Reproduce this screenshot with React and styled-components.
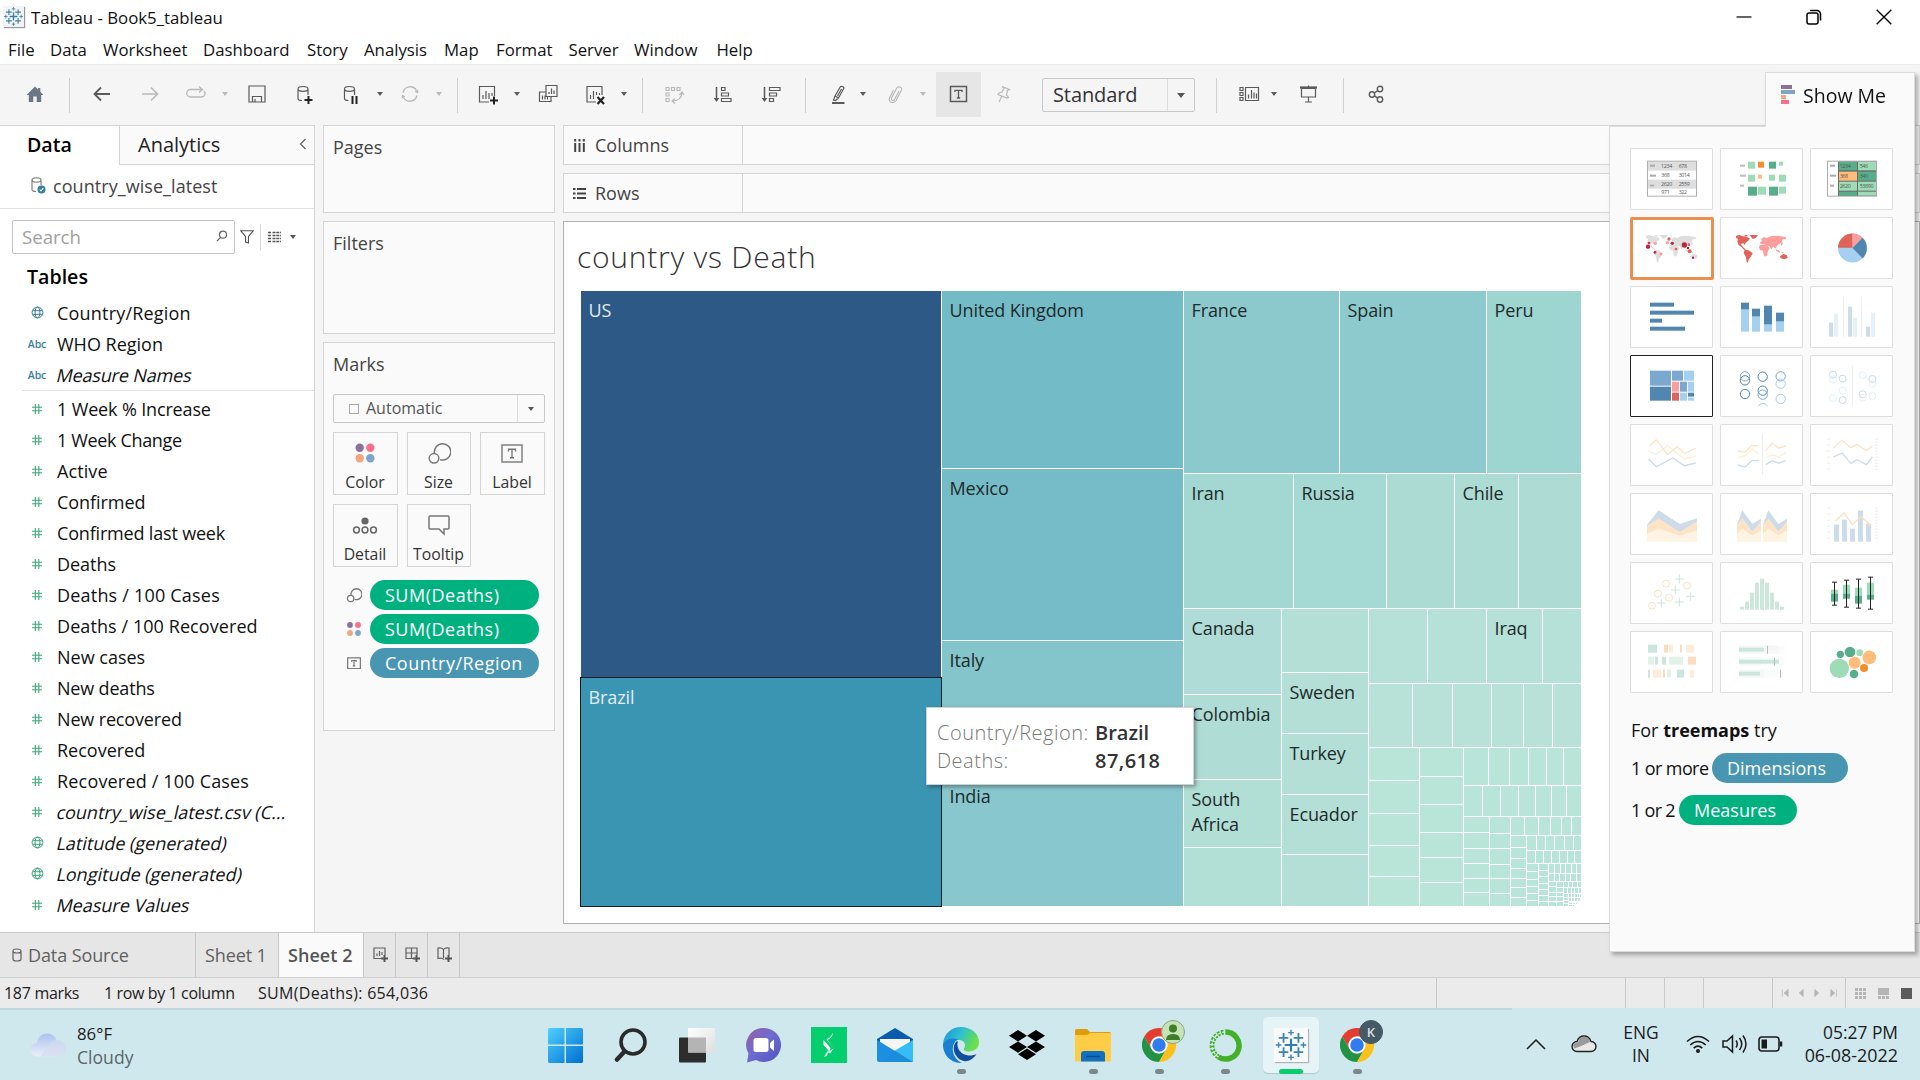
import React from 'react';
import styled, { createGlobalStyle, css } from 'styled-components';

const Global = createGlobalStyle`
  *, *::before, *::after { box-sizing: border-box; }
  html, body { margin: 0; padding: 0; overflow: hidden; }
  body { font-family: 'Open Sans', 'Noto Sans', sans-serif; font-size: 18px; color: #111; background: #fff; }
  svg { display: block; flex: none; }
`;

const line = '#d4d4d4';
const green = '#00b180';
const blue = '#4996b2';

/* ---------- shell ---------- */
const Desktop = styled.div`
  position: relative;
  width: 1920px;
  height: 1080px;
  display: flex;
  flex-direction: column;
  overflow: hidden;
`;
const TitleBar = styled.header`
  height: 36px;
  display: flex;
  align-items: center;
  padding: 0 1px 2px 3px;
  background: #fff;
  font-size: 16.8px;
`;
const AppTile = styled.span`
  width: 21px;
  height: 21px;
  margin: -1px 7px 0 0;
  display: flex;
  align-items: center;
  justify-content: center;
  background: #f4f4f4;
  box-shadow: 1px 1px 1px #999;
`;
const WindowButtons = styled.div`
  margin-left: auto;
  display: flex;
  align-items: center;
  height: 34px;
`;
const WindowButton = styled.span`
  width: 70px;
  display: flex;
  justify-content: center;
`;
const MenuBar = styled.nav`
  height: 28px;
  padding: 0 0 1px 8px;
  display: flex;
  align-items: center;
  background: #fff;
  font-size: 16.8px;
`;
const MenuItem = styled.span`
  width: ${p => p.$w}px;
  white-space: nowrap;
`;
const Toolbar = styled.div`
  height: 61px;
  padding-bottom: 2px;
  display: flex;
  align-items: center;
  background: #f5f5f5;
  border-top: 1px solid #ececec;
`;
const Tool = styled.span`
  width: ${p => p.$w || 26}px;
  height: ${p => p.$h || 26}px;
  margin-left: ${p => p.$gap}px;
  flex: none;
  display: flex;
  align-items: center;
  justify-content: center;
  color: ${p => (p.$off ? '#b9b9b9' : '#5a5a5a')};
  background: ${p => (p.$on ? '#e6e6e6' : 'transparent')};
`;
const Separator = styled.i`
  width: 1px;
  height: 35px;
  flex: none;
  margin: 2px 0 0 ${p => p.$gap}px;
  background: #cfcfcf;
`;
const Caret = styled.i`
  flex: none;
  width: 0;
  height: 0;
  border: ${p => p.$s || 3}px solid transparent;
  border-top: ${p => (p.$s || 3) + 1}px solid currentColor;
  border-bottom: 0;
`;
const FitSelect = styled.div`
  width: 153px;
  height: 34px;
  margin: 2px 0 0 26px;
  display: flex;
  align-items: center;
  border: 1px solid #c8c8c8;
  border-radius: 2px;
  font-size: 20px;
  color: #333;
  span { flex: 1; padding: 0 0 2px 10px; letter-spacing: -0.1px; }
`;
const SelectArrow = styled.div`
  width: ${p => p.$w}px;
  align-self: stretch;
  display: flex;
  align-items: center;
  justify-content: center;
  border-left: 1px solid #dcdcdc;
  color: #555;
`;

/* ---------- body ---------- */
const Body = styled.main`
  height: 807px;
  display: flex;
  background: #f5f5f5;
`;
const DataPane = styled.aside`
  width: 315px;
  display: flex;
  flex-direction: column;
  background: #fff;
  border-top: 1px solid ${line};
  border-right: 1px solid ${line};
`;
const PaneTabs = styled.div`
  height: 39px;
  display: flex;
  font-size: 20px;
`;
const DataTab = styled.div`
  width: 119px;
  padding: 0 0 2px 27px;
  display: flex;
  align-items: center;
  font-weight: 600;
  font-size: 19.6px;
  color: #000;
`;
const AnalyticsTab = styled.div`
  flex: 1;
  padding: 0 7px 2px 18px;
  display: flex;
  align-items: center;
  justify-content: space-between;
  background: #fafafa;
  border-left: 1px solid ${line};
  border-bottom: 1px solid ${line};
  color: #222;
`;
const SourceRow = styled.div`
  height: 44px;
  padding: 0 0 2px 31px;
  display: flex;
  align-items: center;
  gap: 7px;
  color: #444;
  border-bottom: 1px solid #e2e2e2;
  letter-spacing: 0.06px;
`;
const SearchRow = styled.div`
  height: 34px;
  margin: 11px 0 0 12px;
  display: flex;
  align-items: center;
  color: #555;
`;
const SearchBox = styled.div`
  width: 223px;
  height: 34px;
  margin-right: 5px;
  padding: 0 6px 2px 9px;
  display: flex;
  align-items: center;
  justify-content: space-between;
  border: 1px solid #c4c4c4;
  border-radius: 2px;
  color: #a0a0a0;
  font-size: 18.6px;
`;
const SearchDivider = styled.i`
  width: 1px;
  height: 27px;
  margin: 0 7px 0 6px;
  background: #d8d8d8;
`;
const CaretHolder = styled.span`
  margin-left: 9px;
  display: flex;
`;
const TablesHeading = styled.h2`
  height: 43px;
  margin: 0;
  padding: 2px 0 0 27px;
  display: flex;
  align-items: center;
  font-size: 19.6px;
  font-weight: 600;
  color: #000;
`;
const FieldGroup = styled.div`
  & + & { margin: 0 0 0 22px; border-top: 1px solid #e0e0e0; padding-top: 2px; }
  & + & > div { margin-left: -22px; }
`;
const Field = styled.div`
  height: 31px;
  display: flex;
  align-items: center;
  letter-spacing: ${p => p.$ls || 0}px;
  white-space: nowrap;
  color: #111;
`;
const FieldName = styled.span`
  display: inline-block;
  transform: ${p => (p.$slanted ? 'skewX(-13deg)' : 'none')};
`;
const FieldIcon = styled.span`
  width: 57px;
  padding-left: 17px;
  display: flex;
  justify-content: center;
  flex: none;
  color: ${p => p.$c};
  font: 600 10.5px 'Open Sans', sans-serif;
  letter-spacing: -0.1px;
`;

const Shelves = styled.div`
  width: 232px;
  margin-left: 8px;
  display: flex;
  flex-direction: column;
  gap: 8px;
`;
const Card = styled.section`
  height: ${p => p.$h}px;
  padding: 9px 9px 0;
  background: #fafafa;
  border: 1px solid ${line};
  color: #444;
`;
const CardTitle = styled.div`
  height: 25px;
  line-height: 25px;
`;
const MarkSelect = styled.div`
  height: 29px;
  margin-top: 17px;
  display: flex;
  align-items: center;
  border: 1px solid #c8c8c8;
  border-radius: 2px;
  font-size: 16px;
  color: #555;
  span { flex: 1; padding-bottom: 1px; }
`;
const MarkSquare = styled.i`
  width: 10px;
  height: 10px;
  margin: 0 7px 0 15px;
  border: 1px solid #aaa;
`;
const MarkGrid = styled.div`
  margin-top: 9px;
  display: grid;
  grid-template-columns: 65px 64px 65px;
  gap: 9px;
`;
const MarkButton = styled.div`
  height: 63px;
  padding: 8px 1px 0 0;
  display: flex;
  flex-direction: column;
  align-items: center;
  gap: 6px;
  border: 1px solid ${line};
  font-size: 15.8px;
  line-height: 22px;
  color: #333;
`;
const PillList = styled.div`
  margin-top: 13px;
  display: flex;
  flex-direction: column;
  gap: 4px;
`;
const PillRow = styled.div`
  display: flex;
  align-items: center;
  height: 30px;
`;
const PillIcon = styled.span`
  width: 37px;
  padding-left: 4px;
  display: flex;
  justify-content: center;
`;
const Pill = styled.span`
  height: 30px;
  width: ${p => p.$w}px;
  padding: 0 0 1px 15px;
  display: inline-flex;
  align-items: center;
  border-radius: 15px;
  background: ${p => p.$c};
  color: #fff;
  font-weight: 500;
  white-space: nowrap;
  letter-spacing: ${p => p.$ls || 0}px;
`;

const Workspace = styled.div`
  flex: 1;
  margin-left: 8px;
  display: flex;
  flex-direction: column;
  gap: 8px;
`;
const Shelf = styled.div`
  height: 40px;
  display: flex;
  background: #fafafa;
  border: 1px solid ${line};
  color: #444;
`;
const ShelfLabel = styled.div`
  width: 179px;
  padding-left: 9px;
  display: flex;
  align-items: center;
  gap: 9px;
  border-right: 1px solid ${line};
`;
const Sheet = styled.section`
  height: 703px;
  background: #fff;
  border: 1px solid #b0b0b0;
  padding: 14px 0 0 16px;
`;
const SheetTitle = styled.h1`
  height: 42px;
  margin: 0 0 12px -3px;
  font-size: 30px;
  line-height: 42px;
  font-weight: 300;
  letter-spacing: 0.75px;
  color: #333;
`;
const Treemap = styled.svg`
  font-family: 'Open Sans', 'Noto Sans', sans-serif;
  font-size: 18px;
  font-weight: 400;
  letter-spacing: -0.1px;
`;
const Tooltip = styled.div`
  position: absolute;
  left: 926px;
  top: 707px;
  width: 268px;
  height: 78px;
  padding: 11px 0 0 10px;
  display: grid;
  grid-template-columns: 158px 1fr;
  grid-auto-rows: 28px;
  line-height: 28px;
  font-size: 20px;
  background: #fff;
  border: 1px solid #d0d0d0;
  box-shadow: 2px 2px 4px rgba(0, 0, 0, 0.35);
  span { color: #777; font-weight: 300; letter-spacing: 0.5px; white-space: nowrap; }
  b { color: #333; font-weight: 600; letter-spacing: ${p => p.$ls || 0}px; }
  b:last-child { letter-spacing: 0.45px; }
`;

/* ---------- show me ---------- */
const ShowMe = styled.aside`
  position: absolute;
  left: 1609px;
  top: 72px;
  width: 306px;
  display: flex;
  flex-direction: column;
  filter: drop-shadow(3px 3px 2px rgba(0, 0, 0, 0.3));
`;
const ShowMeTab = styled.div`
  position: relative;
  z-index: 1;
  align-self: flex-end;
  width: 150px;
  height: 55px;
  margin-bottom: -1px;
  padding: 0 0 10px 15px;
  display: flex;
  align-items: center;
  gap: 8px;
  background: #fafafa;
  border: 1px solid #dcdcdc;
  border-bottom: 0;
  font-size: 19.5px;
`;
const ShowMeBody = styled.div`
  height: 826px;
  padding: 21px 0 0 20px;
  background: #fafafa;
  border: 1px solid #dcdcdc;
`;
const ThumbGrid = styled.div`
  display: grid;
  grid-template-columns: repeat(3, 90px);
  grid-auto-rows: 69px;
`;
const Thumb = styled.div`
  width: 83px;
  height: 62px;
  background: #fff;
  border: 1px solid #dedede;
  border-radius: 1px;
  svg { margin: -1px; }
  ${p => p.$state === 'suggested' && css`
    width: 84px;
    height: 63px;
    border: 3px solid #eb8f50;
    border-radius: 2px;
    svg { margin: -3px; }
  `}
  ${p => p.$state === 'current' && css`border-color: #222;`}
`;
const HintBlock = styled.div`
  margin-top: 9px;
`;
const Hint = styled.p`
  height: ${p => p.$h || 42}px;
  margin: 0;
  padding-left: 1px;
  display: flex;
  align-items: center;
  white-space: pre;
  b { font-weight: 700; }
`;
const HintText = styled.span`
  width: ${p => p.$w}px;
  letter-spacing: ${p => p.$ls}px;
`;

/* ---------- bottom ---------- */
const SheetTabs = styled.div`
  height: 45px;
  display: flex;
  background: #e6e6e6;
  border-top: 1px solid #cacaca;
  color: #606060;
`;
const SheetTab = styled.div`
  width: ${p => p.$w}px;
  padding-left: ${p => p.$pl || 0}px;
  display: flex;
  align-items: center;
  gap: 6px;
  border-right: 1px solid #c8c8c8;
  letter-spacing: -0.1px;
  white-space: nowrap;
  ${p => p.$icon && css`justify-content: center;`}
  ${p => p.$active && css`background: #fafafa; font-weight: 600; color: #555; letter-spacing: 0.05px; padding-bottom: 1px;`}
`;
const StatusBar = styled.div`
  height: 31px;
  padding-left: 4px;
  display: flex;
  align-items: center;
  background: #ebebeb;
  border-top: 1px solid #cfcfcf;
  font-size: 16px;
  color: #222;
`;
const StatusText = styled.span`
  width: ${p => p.$w}px;
  letter-spacing: ${p => p.$ls}px;
  white-space: nowrap;
`;
const StatusCell = styled.div`
  width: ${p => p.$w}px;
  align-self: stretch;
  display: flex;
  align-items: center;
  justify-content: center;
  gap: ${p => p.$g || 0}px;
  border-left: 1px solid #c9c9c9;
`;

const Taskbar = styled.footer`
  flex: 1;
  display: flex;
  align-items: stretch;
  background: #cfe8ee;
  color: #1b1b1b;
  font-size: 17.4px;
  line-height: 23px;
`;
const Weather = styled.div`
  width: 531px;
  padding-left: 30px;
  display: flex;
  align-items: center;
  gap: 11px;
  border-top: 2px solid #bdd9df;
`;
const WeatherText = styled.div`
  display: flex;
  flex-direction: column;
  gap: 1px;
  padding-top: 1px;
  small { font-size: 17.6px; color: #5b666a; }
  span { font-size: 16.8px; }
`;
const Apps = styled.div`
  width: 981px;
  padding-left: 1px;
  display: flex;
  border-top: 2px solid #bdd9df;
`;
const AppSlot = styled.div`
  width: 66px;
  display: flex;
  flex-direction: column;
  align-items: center;
  padding-top: 7px;
`;
const AppFace = styled.span`
  width: 56px;
  height: 56px;
  position: relative;
  display: flex;
  align-items: center;
  justify-content: center;
  border-radius: 5px;
  ${p => p.$active && css`background: #e6f3f7; box-shadow: 0 1px 1px rgba(0, 0, 0, 0.15);`}
`;
const Running = styled.i`
  position: absolute;
  bottom: -1px;
  left: ${p => (p.$active ? 16 : 24)}px;
  width: ${p => (p.$active ? 24 : 9)}px;
  height: 5px;
  border-radius: 3px;
  background: ${p => (p.$active ? '#07cd6b' : '#7b878b')};
`;
const Badge = styled.span`
  position: absolute;
  left: 30px;
  top: 3px;
  width: 24px;
  height: 24px;
  display: flex;
  align-items: center;
  justify-content: center;
  border-radius: 50%;
  font-size: 13px;
  font-weight: 600;
  color: #d5dde0;
  background: ${p => p.$c};
  border: 1px solid ${p => p.$b};
  overflow: hidden;
`;
const TableauTile = styled.span`
  width: 34px;
  height: 34px;
  display: flex;
  align-items: center;
  justify-content: center;
  background: #f7f9fa;
  box-shadow: 1px 1px 1px #aab4b8;
`;
const Tray = styled.div`
  flex: 1;
  display: flex;
  align-items: center;
  padding-right: 22px;
`;
const TrayItem = styled.span`
  width: ${p => p.$w}px;
  display: flex;
  flex-direction: column;
  align-items: ${p => p.$a || 'center'};
  white-space: nowrap;
`;
const Clock = styled(TrayItem)`
  flex: 1;
  span:last-child { font-size: 17.9px; }
`;

/* ---------- icons ---------- */
const I = ({ children, s = 26, w, h, sw = 1.2 }) => (
  <svg width={w || s} height={h || s} viewBox={`0 0 ${w || s} ${h || s}`} fill="none" stroke="currentColor" strokeWidth={sw}>{children}</svg>
);
const plus = (x, y, a = 4, sw = 2, c = '#222') => <path key={x + ',' + y} d={`M${x - a} ${y}h${2 * a}M${x} ${y - a}v${2 * a}`} stroke={c} strokeWidth={sw} />;

const TableauMark = ({ size }) => (
  <svg width={size} height={size} viewBox="-16 -16 32 32">
    {plus(0, 0, 6, 2, '#2f7eae')}
    {[[-7, -6.7], [7, -6.7], [-7, 6.7], [7, 6.7]].map(([x, y]) => plus(x, y, 4.5, 1.7, '#3b84ad'))}
    {[[0, -11.6], [0, 11.6], [-11.7, 0], [11.7, 0]].map(([x, y]) => plus(x, y, 2.7, 1.3, '#3b84ad'))}
  </svg>
);
const Drum = ({ x, y, h = 14 }) => <path d={`M${x + 4} ${y + h}q-4 0-4-2V${y + 2.5}q0-2.5 5-2.5t5 2.5v6M${x} ${y + 2.5}q0 2.3 5 2.3t5-2.3`} />;
const Globe = () => <I s={13} sw={1}><circle cx="6.5" cy="6.5" r="5.4" /><ellipse cx="6.5" cy="6.5" rx="2.4" ry="5.4" /><path d="M1.600 4.700h9.800M1.600 8.300h9.800" /></I>;
const Hash = () => <I s={12} sw={1.1}><path d="M1 4.300h10M1 7.800h10M4.300 1v10M7.800 1v10" /></I>;
const Dots = ({ s, r, d }) => (
  <svg width={s} height={s} viewBox={`0 0 ${s} ${s}`}>
    <circle cx={s / 2 - d} cy={s / 2 - d} r={r} fill="#8a7198" /><circle cx={s / 2 + d} cy={s / 2 - d} r={r} fill="#f7708b" />
    <circle cx={s / 2 - d} cy={s / 2 + d} r={r} fill="#f2a57e" /><circle cx={s / 2 + d} cy={s / 2 + d} r={r} fill="#7ea4c9" />
  </svg>
);
const SizeIcon = ({ s }) => (
  <svg width={s} height={s} viewBox="0 0 24 24" fill="none" stroke="#777" strokeWidth={s > 20 ? 1.5 : 1.9}>
    <path d="M7.600 12.500A8.200 8.200 0 1 1 13 18.600" /><circle cx="7" cy="17.300" r="4.800" />
  </svg>
);
const LabelIcon = ({ w, h }) => (
  <svg width={w} height={h} viewBox="0 0 22 19" fill="none" stroke="#777" strokeWidth={w > 16 ? 1.4 : 1.9}>
    <rect x="1" y="1" width="20" height="17" /><path d="M7.500 7.500v-2.300h7v2.300M11 5.200v8.500M9 13.700h4" />
  </svg>
);
const toolShapes = {
  home: <I sw={0}><path d="M13 5.500 4.500 14h2.300v7h4.500v-5.500h3.400V21h4.500v-7h2.300L18.300 10.700V7h-2.200v1.500z" fill="#6d7685" /></I>,
  back: <I sw={1.8}><path d="M21 13H5.500M12 6.500 5.500 13l6.500 6.500" /></I>,
  forward: <I sw={1.6}><path d="M5 13h15.500M14 6.500l6.500 6.500-6.500 6.500" /></I>,
  replay: <I sw={1.3}><path d="M13 8.500H7.500a3.700 3.700 0 0 0 0 7.500h11a3.500 3.500 0 0 0 2.500-6" /><path d="M13 8.500h6M16 5.500l3.500 3-3.500 3" /></I>,
  save: <I><path d="M5 5h16v16H5zM8.500 21v-5.500h9V21M11 21v-3" /></I>,
  dbAdd: <I><Drum x={6} y={5.5} />{plus(16.5, 19)}</I>,
  dbPause: <I><Drum x={6.5} y={5.5} /><path d="M14.500 15v8M18.500 15v8" stroke="#222" strokeWidth="2" /></I>,
  refresh: <I sw={1.3}><path d="M6 11.500A7.300 7.300 0 0 1 19.500 9.500M20 14.500A7.300 7.300 0 0 1 6.500 16.500" /><path d="m21.500 8.500-.5 4-3.500-2zM4.500 17.500l.5-4 3.500 2z" fill="currentColor" stroke="none" /></I>,
  newSheet: <I><path d="M14 21H4.500V5.500h15V15M8 18v-4M11 18v-8M14 18v-6M17 15v-3" />{plus(19, 19.5)}</I>,
  duplicate: <I><path d="M11 4.500h11v11H11zM14 13v-2M16.500 13V7.500M19 13V9.500M11 11H4.500v9.500H16v-5M7.500 18.500v-4M10 18.500v-4M12.500 18.500v-3" /></I>,
  clear: <I><path d="M14 21H5V5.500h15V14M8.500 18v-4M11.500 18v-8M14.500 14v-3M17.500 14v-2" /><path d="m15.500 16 6.500 7M22 16l-6.500 7" stroke="#222" strokeWidth="2.200" /></I>,
  swap: <I><path d="M5 6.500h3v3H5zM10.500 6.500h3v3h-3zM16 6.500h3v3h-3zM5 12h3v3H5zM5 17.500h3v3H5zM21 12q-1 8-9.500 8M18.500 14l2.500-3 2 3M14 17.500 11 20l3 2.500" /></I>,
  asc: <I><path d="M7.500 6v12" strokeWidth="1.500" /><path d="m4.700 17 2.800 4 2.800-4z" fill="currentColor" stroke="none" /><path d="M12.500 6.500h3.500v3h-3.500zM12.500 12h7v3h-7zM12.500 17.500h9.500v3h-9.500z" /></I>,
  desc: <I><path d="M6.500 6v12" strokeWidth="1.500" /><path d="m3.700 17 2.800 4 2.800-4z" fill="currentColor" stroke="none" /><path d="M11.500 6.500H22v3H11.500zM11.500 12h7v3h-7zM11.500 17.500h4v3h-4z" /></I>,
  pen: <I><path d="M15.500 5.500q3-.5 3.500 1.500l-5.500 10-3.500-2zM10 15l-1.500 4 2 .5 3-2.500M16.500 8l-4 7" /><path d="M7 22h12.500" strokeWidth="2" /></I>,
  clip: <I><path d="m17 10-4.500 8.500c-1 2-4 1-3-1.500L14.500 7.500c1.500-3 6-1.500 5 1.500L14 19.500c-2.500 4-8 1.500-6.500-2.500l4-8" /></I>,
  text: <I sw={1.5}><path d="M4.500 5.500h16v15h-16z" /><path d="M9 11V9.300h7V11M12.500 9.300V17M10.800 17h3.400" strokeWidth="1.300" /></I>,
  pin: <I><path d="m12 5.500 7.500 3-2 1-1 4.500 2 2.500-1.500.5-9-3.500 1-1.500 3-1 2-4zM12 15l-3 6" /></I>,
  cards: <I><path d="M4 6.500h3v3H4zM4 11.500h3v3H4zM4 16.500h3v3H4zM9.500 6.500h13v13h-13z" /><path d="M12.500 17.500v-4M15.500 17.500V9M18 17.500v-6M20.500 17.500v-5" /></I>,
  present: <I><path d="M5 6.500h17" strokeWidth="2.200" /><path d="M13.500 4.500v2M6.500 7.500h14v8.500h-14zM13.500 16v5M10 21h7" /></I>,
  share: <I sw={1.4}><circle cx="17" cy="8" r="2.700" /><circle cx="9" cy="13.500" r="2.700" /><circle cx="17" cy="18.500" r="2.700" /><path d="m11.300 12 3.600-2.500M11.300 14.800l3.600 2.300" /></I>,
};

const tools = [
  ['home', 22], ['|', 21], ['back', 19], ['forward', 22, 1], ['replay', 20, 1], ['v', 12, 1], ['save', 15], ['dbAdd', 22], ['dbPause', 20], ['v', 12],
  ['refresh', 13, 1], ['v', 12, 1], ['|', 14], ['newSheet', 17], ['v', 12], ['duplicate', 14], ['clear', 21], ['v', 12], ['|', 14], ['swap', 18, 1],
  ['asc', 22], ['desc', 23], ['|', 21], ['pen', 19], ['v', 8], ['clip', 15, 1], ['v', 11, 1], ['T', 9], ['pin', 9, 1], ['select', 26], ['|', 21],
  ['cards', 19], ['v', 8], ['present', 17], ['|', 22], ['share', 19],
];
const ToolEntry = ({ kind, gap, off }) => {
  if (kind === '|') return <Separator $gap={gap} />;
  if (kind === 'v') return <Tool $gap={gap} $w={8} $off={off}><Caret /></Tool>;
  if (kind === 'T') return <Tool $gap={gap} $w={45} $h={45} $on>{toolShapes.text}</Tool>;
  if (kind === 'select') return <FitSelect><span>Standard</span><SelectArrow $w={27}><Caret $s={4} /></SelectArrow></FitSelect>;
  return <Tool $gap={gap} $off={off}>{toolShapes[kind]}</Tool>;
};

/* ---------- treemap ---------- */
const small = '#b9e4d8';
const span = (from, to, cuts) => {
  const edges = [from - 1, ...cuts, to];
  return edges.slice(1).map((e, i) => [edges[i] + 1, e]);
};
const row = (x0, x1, y0, y1, cuts, fill = small) => span(x0, x1, cuts).map(([a, b], i) => [a, y0, b, y1, Array.isArray(fill) ? fill[i] : fill]);
const col = (x0, x1, y0, y1, cuts, fill = small) => span(y0, y1, cuts).map(([a, b], i) => [x0, a, x1, b, Array.isArray(fill) ? fill[i] : fill]);
const cells = [
  [581, 291, 941, 677, '#2d5986'],
  ...col(942, 1183, 291, 906, [468, 640, 777], ['#74bbc8', '#76bcc8', '#84c4cb', '#88c7ce']),
  ...row(1184, 1581, 291, 473, [1339, 1486], ['#8bc9cd', '#8ccacd', '#9dd5d1']),
  ...row(1184, 1581, 474, 608, [1293, 1386, 1454, 1518], ['#a2d7d2', '#a5d9d4', '#acdbd4', '#addcd4', '#aedcd5']),
  ...col(1184, 1281, 609, 906, [694, 779, 847], ['#afdcd6', '#afddd6', '#b1dfd6', '#b2e0d7']),
  ...col(1282, 1368, 609, 906, [672, 733, 794, 854], '#b3dfd7'),
  ...row(1369, 1581, 609, 683, [1427, 1486, 1542], '#b6e1d8'),
  ...row(1369, 1581, 684, 747, [1412, 1452, 1491, 1523, 1552], '#b8e2d8'),
  ...col(1369, 1419, 748, 906, [780, 813, 845, 876]),
  ...col(1420, 1463, 748, 906, [776, 804, 832, 857, 882]),
  ...row(1464, 1581, 748, 785, [1488, 1509, 1528, 1546, 1563]),
  ...row(1464, 1581, 786, 816, [1482, 1500, 1518, 1535, 1551, 1566]),
  ...col(1464, 1489, 817, 906, [832, 848, 863, 878, 892]),
  ...col(1490, 1510, 817, 906, [833, 848, 864, 878, 893]),
  ...row(1511, 1581, 817, 835, [1524, 1538, 1550, 1561, 1571]),
  ...col(1511, 1526, 836, 906, [847, 858, 868, 878, 887, 897]),
  ...row(1527, 1581, 836, 850, [1536, 1545, 1554, 1564, 1573]),
  ...row(1527, 1581, 851, 863, [1535, 1543, 1551, 1559, 1567, 1574]),
  ...col(1527, 1538, 864, 906, [871, 879, 886, 893, 900]),
  ...col(1539, 1548, 864, 906, [870, 876, 883, 889, 895, 901]),
  ...row(1549, 1581, 864, 873, [1554, 1560, 1565, 1571, 1576]),
  ...row(1549, 1581, 874, 881, [1554, 1559, 1565, 1570, 1576]),
  ...col(1549, 1556, 882, 906, [886, 892, 896, 901]),
  ...col(1557, 1563, 882, 906, [887, 892, 896, 901]),
  ...row(1564, 1581, 882, 887, [1568, 1572, 1577]),
  ...row(1564, 1581, 888, 893, [1567, 1571, 1574, 1578]),
  ...col(1564, 1568, 894, 906, [897, 900, 903]),
  ...row(1569, 1581, 894, 897, [1571, 1574, 1577, 1579]),
  ...row(1569, 1580, 898, 901, [1571, 1574, 1577]),
  ...row(1569, 1577, 903, 904, [1572, 1575]),
  ...row(1569, 1574, 905, 906, [1572]),
];
const labels = [
  [581, 291, 'US'], [942, 291, 'United Kingdom'], [942, 469, 'Mexico'], [942, 641, 'Italy'], [942, 777, 'India'],
  [1184, 291, 'France'], [1340, 291, 'Spain'], [1487, 291, 'Peru'], [1184, 474, 'Iran'], [1294, 474, 'Russia'], [1455, 474, 'Chile'],
  [1184, 609, 'Canada'], [1184, 695, 'Colombia'], [1184, 780, 'South'], [1184, 805, 'Africa'], [1282, 673, 'Sweden'], [1282, 734, 'Turkey'],
  [1282, 795, 'Ecuador'], [1487, 609, 'Iraq'], [581, 678, 'Brazil'],
];

/* ---------- show me thumbnails ---------- */
const R = (c, list) => list.map(([x, y, w, h], i) => <rect key={i} x={x} y={y} width={w} height={h} fill={c} />);
const C = (c, r, list, sw = 3) => list.map(([x, y], i) => <circle key={i} cx={x} cy={y} r={r} fill="none" stroke={c} strokeWidth={sw} />);
const L = (c, d, sw = 4) => <path d={d} fill="none" stroke={c} strokeWidth={sw} />;
const D = (list) => list.map(([x, y, r, c], i) => <circle key={i} cx={x} cy={y} r={r} fill={c} />);
const T = (list) => list.map(([x, y, t]) => <text key={x + t} x={x} y={y} fontSize="16" fill="#555" letterSpacing="-1">{t}</text>);
const World = ({ a, b }) => (
  <g stroke="none">
    <path fill={a} d="M408 318 418 316 428 320 440 321 450 327 444 334 438 338 434 346 430 341 422 342 426 349 432 355 438 360 433 361 424 352 416 346 412 336 414 328 408 324zM448 316h26l-6 8-10 4-6-8zM434 316h8v4h-8zM434 360l12 2 12 9-6 11-5 5-4 12-3-2-2-15-7-11zM540 380l10-7 10 3 3 8-9 5-12-3z" />
    <path fill={b} d="M484 328 492 322 500 325 515 319 535 318 558 323 558 328 548 329 545 338 536 344 530 349 527 357 520 350 514 359 508 350 500 347 492 344 482 343 480 338 486 334zM480 346h20l9 10-5 8-3 13-6 4-4-6-2-12-9-2-3-8zM526 358l14 6-1 5-10-5zM543 340l5-4-1 10-4 2zM544 364l8 6-6 1z" />
  </g>
);
const ticks = [0, 1, 2, 3, 4, 5];
const thumbs = [
  <g><rect x="142.5" y="94.5" width="147" height="105" fill="#fff" />{R('#dedede', [[143, 95, 146, 28], [143, 150, 146, 27]])}{R('#aaa', [[150, 105, 15, 6], [150, 135, 18, 6], [150, 165, 12, 5]])}{T([[183, 115, '1234'], [236, 115, '678'], [184, 142, '368'], [236, 142, '3014'], [183, 169, '2620'], [236, 169, '2559'], [184, 193, '971'], [236, 193, '322']])}<rect x="142.5" y="94.5" width="147" height="105" fill="none" stroke="#b0b0b0" strokeWidth="3" /></g>,
  <g>{R('#bdbdbd', [[420, 105, 15, 6], [420, 135, 18, 6], [420, 165, 12, 6]])}{R('#9edbb7', [[444, 96, 21, 21], [537, 96, 12, 12], [444, 135, 21, 21], [507, 135, 18, 18], [537, 135, 21, 21], [474, 171, 24, 24], [537, 171, 21, 21]])}{R('#56ae8a', [[507, 96, 21, 21], [444, 171, 27, 27], [507, 171, 27, 27]])}{R('#f28e2b', [[474, 96, 18, 18]])}{R('#ffbc7a', [[474, 135, 12, 12]])}</g>,
  <g>{R('#696969', [[714, 95, 116, 104]])}{R('#56ae8a', [[717, 96, 54, 26], [774, 126, 55, 27], [717, 186, 54, 12]])}{R('#9edbb7', [[774, 96, 55, 26], [717, 156, 54, 27], [774, 156, 55, 27], [774, 186, 55, 12]])}{R('#ffbc7a', [[717, 126, 54, 27]])}{R('#aaa', [[690, 105, 15, 6], [690, 135, 18, 6], [690, 165, 12, 6]])}{T([[719, 114, '1234'], [779, 114, '546'], [719, 145, '368'], [779, 145, '340'], [719, 175, '2620'], [779, 175, '53890']])}<rect x="682.5" y="94.5" width="147" height="105" fill="none" stroke="#aaa" strokeWidth="3" /></g>,
  <g><g transform="translate(-270 0)"><World a="#dedede" b="#dedede" /></g>{D([[144, 351, 6.5, '#b9263f'], [147, 340, 4, '#cf3a4d'], [166, 341, 5, '#ff9d9a'], [165, 368, 4, '#b9263f'], [183, 373, 4.5, '#ff9d9a'], [207, 328, 5, '#e15f56'], [202, 339, 5, '#ff9d9a'], [217, 341, 5, '#b9263f'], [228, 358, 4, '#e15f56'], [253, 346, 8, '#b9263f'], [267, 345, 4, '#e15f56'], [264, 355, 4, '#b9263f'], [269, 365, 6, '#e15f56'], [279, 384, 3.5, '#b9263f']])}</g>,
  <World a="#e16259" b="#ff9d9a" />,
  <g><circle cx="757.5" cy="355" r="43.5" fill="#a5d0f0" /><path d="M757.500 354V311.500A43.500 43.500 0 0 0 714 354z" fill="#e16259" /><path d="M757.500 354V311.500a43.500 43.500 0 0 1 30 12z" fill="#ff9d9a" /><path d="M757.500 355l30-31a43.500 43.500 0 0 1 0 62z" fill="#5086b0" /></g>,
  <g>{R('#5086b0', [[150, 519, 72, 12], [150, 543, 132, 12], [150, 567, 36, 12], [150, 591, 105, 12]])}</g>,
  <g>{R('#5086b0', [[423, 519, 24, 21], [456, 537, 24, 24], [492, 528, 24, 57], [528, 549, 24, 27]])}{R('#a5d0f0', [[423, 540, 24, 66], [456, 561, 24, 45], [492, 585, 24, 21], [528, 576, 24, 30]])}</g>,
  <g>{R('#eee', [[729, 501, 3, 120], [783, 501, 3, 120]])}{R('#cedbe8', [[687, 579, 12, 42], [744, 531, 12, 90], [798, 591, 12, 30]])}{R('#e3f1fc', [[702, 552, 12, 69], [759, 564, 12, 57], [813, 549, 12, 72]])}</g>,
  <g>{R('#7ba8ce', [[150, 723, 63, 45], [216, 723, 33, 30], [240, 756, 21, 30]])}{R('#5086b0', [[150, 771, 63, 42], [264, 789, 18, 12]])}{R('#a5d0f0', [[252, 723, 30, 30], [264, 756, 18, 30], [240, 789, 21, 24], [264, 804, 18, 9]])}{R('#ff9d9a', [[216, 756, 21, 30]])}{R('#e16259', [[216, 789, 21, 24]])}</g>,
  <g>{C('#5086b0', 14, [[435, 752], [435, 793], [488, 741], [488, 783]])}{C('#7ba8ce', 14, [[435, 740], [488, 795], [542, 740]])}{C('#a5d0f0', 14, [[542, 762], [542, 808]])}<path d="M475 830a14 12 0 0 1 27 0" fill="none" stroke="#a5d0f0" strokeWidth="3" /></g>,
  <g>{R('#eee', [[756, 708, 3, 120]])}{C('#cbd9e6', 10.5, [[699, 735], [728, 747], [728, 811], [817, 748], [788, 794]])}{C('#e3f1fc', 10.5, [[699, 750], [728, 783], [699, 805], [788, 737], [817, 762], [788, 804], [817, 799]])}</g>,
  <g>{L('#fff0d2', 'M146 125l23 9 34-26 50 40 34-7')}{L('#fee3c6', 'M149 108l20-18 34 45 29-24 22 21 33-17')}{L('#cddce9', 'M146 148l23 23 50-26 34 23 34-8')}</g>,
  <g>{R('#eee', [[486, 75, 3, 120]])}{L('#fff0d2', 'M414 144l22-5 20-21 20 15M497 143l20-7 20 6 21-13')}{L('#fee3c6', 'M414 124l22 4 19-21 21 2M497 123l20-23 18 15 23-6')}{L('#cddce9', 'M414 166l22 6 19-19h22M497 165l20-12 18 8 23-8')}</g>,
  <g>{R('#eee', ticks.map(i => [681, 87 + i * 18, 9, 3]))}{R('#eee', [...Array(11)].map((_, i) => [825, 87 + i * 9, 9, 3]))}{L('#fee3c6', 'M700 115l26-23 27 22 18-10 28 19 18-15')}{L('#cddce9', 'M700 142l26-12 27 31 18-11 28 15 18-23')}</g>,
  <g><path fill="#cddce9" d="M141 345l35-43 63 41 52-17v10l-52 33-63-42-35 22z" /><path fill="#fee3c6" d="M141 350l35-24 63 41 52-32v28l-52 15-63-20-35 16z" /><path fill="#fff3e4" d="M141 374l35-16 63 21 52-16v33H141z" /></g>,
  <g>{[411, 489].map(x => <g key={x} transform={`translate(${x} 0)`}><path fill="#cddce9" d="M0 345l16-43 30 41 26-16v10l-26 30-30-40L0 348z" /><path fill="#fee3c6" d="M0 350l16-24 30 41 26-32v28l-26 15-30-20-16 16z" /><path fill="#fff3e4" d="M0 374l16-16 30 21 26-16v33H0z" /></g>)}</g>,
  <g>{R('#eee', ticks.map(i => [681, 294 + i * 18, 9, 3]))}{R('#eee', [...Array(11)].map((_, i) => [825, 294 + i * 9, 9, 3]))}{R('#cddce9', [[702, 345, 15, 51], [726, 330, 15, 66], [750, 357, 15, 39], [774, 303, 15, 93], [798, 342, 15, 54]])}{L('#fee0c0', 'M706 334l26-25 25 36 26-24 28 25')}</g>,
  <g>{C('#fee0c0', 10.5, [[198, 522], [174, 552], [261, 528], [207, 564], [156, 588]])}{[[238, 508], [226, 541], [271, 560], [184, 580], [238, 577]].map(([x, y]) => plus(x, y, 13.5, 3, '#cbe6db'))}</g>,
  <g>{R('#cbe6db', [[420, 591, 12, 9], [435, 576, 12, 24], [450, 549, 12, 51], [465, 519, 12, 81], [480, 507, 12, 93], [495, 519, 12, 81], [510, 549, 12, 51], [525, 576, 12, 24], [540, 591, 12, 9]])}</g>,
  <g>{R('#9edbb7', [[693, 540, 21, 12], [729, 525, 21, 27], [765, 534, 21, 24], [801, 519, 21, 36]])}{R('#56ae8a', [[693, 552, 21, 24], [729, 552, 21, 15], [765, 558, 21, 24], [801, 555, 21, 15]])}{L('#222', 'M703.500 517.500v69M696 517.500h15M696 586.500h15M739.500 511.500v81M732 511.500h15M732 592.500h15M775.500 508.500v87M768 508.500h15M768 595.500h15M811.500 502.500v96M804 502.500h15M804 598.500h15', 3)}</g>,
  <g>{R('#cbe6db', [[144, 705, 27, 24], [165, 741, 9, 24], [186, 741, 12, 24], [144, 780, 6, 24], [231, 780, 21, 24]])}{R('#e1f3e9', [[144, 741, 18, 24], [207, 741, 42, 24], [201, 780, 12, 24]])}{R('#fcdcc0', [[192, 705, 12, 24], [240, 705, 6, 24], [264, 741, 24, 24], [189, 780, 6, 24]])}{R('#ffecd8', [[207, 705, 12, 24], [258, 705, 24, 24], [159, 780, 24, 24], [270, 780, 12, 24]])}</g>,
  <g>{R('#fafcfc', [[417, 708, 138, 24], [417, 744, 138, 24], [417, 780, 132, 24]])}{R('#f7f7f7', [[417, 708, 120, 24], [417, 744, 66, 24], [417, 780, 75, 24]])}{R('#cbe6db', [[417, 714, 75, 12], [417, 750, 120, 12], [417, 786, 63, 12]])}{R('#bbb', [[501, 708, 3, 24], [522, 744, 3, 24], [540, 780, 3, 24]])}</g>,
  <g>{D([[718, 776, 29, '#9edbb7'], [721, 734, 11, '#56ae8a'], [750, 727, 16, '#56ae8a'], [779, 729, 10, '#9edbb7'], [764, 759, 18, '#ffbc7a'], [808, 743, 20.5, '#ffbc7a'], [792, 775, 12, '#f28e2b'], [762, 793, 13, '#56ae8a']])}</g>,
];
const thumbRows = [55, 262, 469, 676, 43, 250, 457, 664];

/* ---------- taskbar artwork ---------- */
const Chrome = () => (
  <svg width="34" height="34" viewBox="0 0 48 48">
    <path fill="#e53c30" d="M24 12h20.800A24 24 0 0 0 3.200 12l10.400 18A12 12 0 0 1 24 12z" />
    <path fill="#249245" d="M3.200 12A24 24 0 0 0 24 48l10.400-18a12 12 0 0 1-20.800 0z" />
    <path fill="#fcc01c" d="M44.800 12A24 24 0 0 1 24 48l10.400-18A12 12 0 0 0 24 12z" />
    <circle cx="24" cy="24" r="12" fill="#fff" /><circle cx="24" cy="24" r="9.500" fill="#2f7cf0" />
  </svg>
);
const art = {
  start: <svg width="35" height="35" viewBox="0 0 35 35"><defs><linearGradient id="win" gradientUnits="userSpaceOnUse" x1="0" y1="0" x2="35" y2="35"><stop offset="0" stopColor="#4fd0fe" /><stop offset="1" stopColor="#006fd1" /></linearGradient></defs><path fill="url(#win)" d="M1.500 0H16.500V16.500H0V1.500A1.500 1.500 0 0 1 1.500 0zM18 0h15.500A1.500 1.500 0 0 1 35 1.500v15H18zM0 18h16.500v17H1.500A1.500 1.500 0 0 1 0 33.500zM18 18h17v15.500a1.500 1.500 0 0 1-1.500 1.500H18z" /></svg>,
  search: <svg width="34" height="34" viewBox="0 0 34 34" fill="none" stroke="#2a2a2a"><circle cx="19" cy="14" r="12" strokeWidth="3.600" /><path d="M10.500 23.500 3 31.500" strokeWidth="4.500" strokeLinecap="round" /></svg>,
  tasks: <svg width="37" height="35" viewBox="0 0 37 35"><defs><linearGradient id="tsk" x1="0" y1="0" x2="1" y2="1"><stop offset="0" stopColor="#fff" /><stop offset="1" stopColor="#dedede" /></linearGradient></defs><rect x="0" y="9.500" width="27" height="25" rx="1" fill="#2d2d2d" /><rect x="9" y="0" width="27" height="24.500" rx="1" fill="url(#tsk)" /><path d="M9 9.500h18v15H9z" fill="#b4b4b4" /></svg>,
  chat: <svg width="35" height="35" viewBox="0 0 35 35"><defs><linearGradient id="cht" x1="0" y1="0" x2="1" y2="1"><stop offset="0" stopColor="#9a5fa0" /><stop offset=".45" stopColor="#6f6bd0" /><stop offset="1" stopColor="#4f54c0" /></linearGradient></defs><path fill="url(#cht)" d="M18 0a17 17 0 1 1-8 32l-9 2.500 1.500-9A17 17 0 0 1 18 0z" /><rect x="7.500" y="10" width="15" height="14" rx="2.500" fill="#fff" /><path d="m24 15 4-3.500v11.500l-4-3.500z" fill="#fff" /></svg>,
  striver: <svg width="36" height="36" viewBox="0 0 36 36"><path fill="#05ce6e" d="M0 0h36v36H0z" /><path fill="#fff" d="M22 5.500c-1.500 4-4 5.500-6.500 7l7.500 8.500-4 5.500-2-3-4 6.500 2.500-1c1-3.500 4-5.500 7.500-8l-6.500-8c3.500-1.500 5-4 5.500-7.500zM12.500 13l7 8-1 3.500-6-6.500z" /></svg>,
  mail: <svg width="36" height="34" viewBox="0 0 36 34"><path fill="#0a5bab" d="M0 11 18 0l18 11v8H0z" /><path fill="#f5f5f5" d="M3 11h30v8L18 26 3 19z" /><path fill="#1c8fe0" d="M0 12l36 22H2a2 2 0 0 1-2-2z" /><path fill="#36bdf5" d="M36 12 18 22.500 36 34z" /><path fill="#1b8ddd" d="M18 22.500 36 34H8z" /></svg>,
  edge: <svg width="36" height="36" viewBox="0 0 36 36"><defs><linearGradient id="eg" x1="0" y1="0" x2="1" y2=".4"><stop offset="0" stopColor="#1b8fd8" /><stop offset=".5" stopColor="#2cbfd2" /><stop offset="1" stopColor="#6be04a" /></linearGradient></defs><path fill="url(#eg)" d="M0 17C1 6 9 0 18 0c10 0 18 6.500 18 15 0 6-4.500 9.500-10 9.500-4 0-6-1.500-5-3 2-2.500 1.500-8-4.500-8.500C9 12.500 2 14 0 17z" /><path fill="#1a7fd0" d="M0 17c3-5 10-7 15-4.500-4 2-6 7-5 12 1 5 4 9.500 9 11.500C8 36.500-.5 28 0 17z" /><path fill="#0f4f9d" d="M14 14c-5 4-4 12 1 17 6 5.500 14 3.500 18.500-4-6 3-15 1.500-18-5-1.300-3-1.500-5-.5-7z" /></svg>,
  dropbox: <svg width="36" height="32" viewBox="0 0 36 32"><path d="m9 1 9 5.700-9 5.700-9-5.700zM27 1l9 5.700-9 5.700-9-5.700zM9 12.400l9 5.700-9 5.700-9-5.700zM27 12.400l9 5.700-9 5.700-9-5.700zM18 19.500l9 5.700-9 5.800-9-5.800z" /></svg>,
  folder: <svg width="36" height="33" viewBox="0 0 36 33"><path fill="#dd9d0c" d="M0 1.500A1.500 1.500 0 0 1 1.500 0H12l3 3h19.500A1.500 1.500 0 0 1 36 4.500V10H0z" /><path fill="#fecd45" d="M0 6h12l3-2h21v27.500a1 1 0 0 1-1 1H1a1 1 0 0 1-1-1z" /><path fill="#0f70c4" d="M6 32.500V25a3 3 0 0 1 3-3h18a3 3 0 0 1 3 3v7.500z" /><path d="M11 27.500h14" stroke="#0a4a86" strokeWidth="1.500" /></svg>,
  conda: <svg width="33" height="33" viewBox="0 0 33 33" fill="none"><path d="M16.500 3a13.500 13.500 0 1 1-7 25" stroke="#43b02a" strokeWidth="5.500" /><path d="M9.500 28a13.500 13.500 0 0 1 7-25" stroke="#43b02a" strokeWidth="4.800" strokeDasharray="2.500 1.300" /><path d="M9.500 28a13.500 13.500 0 0 1 7-25" stroke="#d8eee6" strokeWidth="1.300" strokeDasharray="3 1.500" /></svg>,
};
const apps = [['start'], ['search'], ['tasks'], ['chat'], ['striver'], ['mail'], ['edge', 1], ['dropbox'], ['folder', 1], ['chromeUser', 1], ['conda', 1], ['tableau', 2], ['chromeK', 1]];
const TaskFace = ({ kind }) => {
  if (kind === 'tableau') return <TableauTile><TableauMark size={34} /></TableauTile>;
  if (kind === 'chromeUser') return <><Chrome /><Badge $c="#c5e3b5" $b="#8fa08a"><svg width="20" height="20" viewBox="0 0 20 20" fill="#3d7d2b"><circle cx="10" cy="6.500" r="4" /><path d="M3 18q0-6 7-6t7 6z" /></svg></Badge></>;
  if (kind === 'chromeK') return <><Chrome /><Badge $c="#455a64" $b="#455a64">K</Badge></>;
  return art[kind];
};

const menus = [['File', 42], ['Data', 53], ['Worksheet', 100], ['Dashboard', 104], ['Story', 57], ['Analysis', 80], ['Map', 52], ['Format', 72.5], ['Server', 65.5], ['Window', 82.5], ['Help', 60]];
const dimensionFields = [['globe', 'Country/Region', 0, 0.2], ['abc', 'WHO Region'], ['abc', 'Measure Names', 1, -0.15]];
const measureFields = [
  ['hash', '1 Week % Increase', 0, -0.15], ['hash', '1 Week Change', 0, -0.35], ['hash', 'Active', 0, 0.1], ['hash', 'Confirmed', 0, -0.05], ['hash', 'Confirmed last week', 0, -0.18], ['hash', 'Deaths', 0, -0.05],
  ['hash', 'Deaths / 100 Cases', 0, 0.2], ['hash', 'Deaths / 100 Recovered', 0, 0.08], ['hash', 'New cases'], ['hash', 'New deaths', 0, -0.18], ['hash', 'New recovered', 0, -0.15], ['hash', 'Recovered'],
  ['hash', 'Recovered / 100 Cases', 0, 0.18], ['hash', 'country_wise_latest.csv (C...', 1], ['globe', 'Latitude (generated)', 1], ['globe', 'Longitude (generated)', 1], ['hash', 'Measure Values', 1],
];
const FieldRow = ({ field: [icon, name, slanted, ls], color }) => (
  <Field $ls={ls}>
    <FieldIcon $c={color}>{icon === 'abc' ? 'Abc' : icon === 'globe' ? <Globe /> : <Hash />}</FieldIcon>
    <FieldName $slanted={slanted}>{name}</FieldName>
  </Field>
);

export default function App() {
  return (
    <Desktop>
      <Global />
      <TitleBar>
        <AppTile><TableauMark size={21} /></AppTile>
        Tableau - Book5_tableau
        <WindowButtons>
          <WindowButton><I s={16}><path d="M.5 8h15" stroke="#000" /></I></WindowButton>
          <WindowButton><I s={16} sw={1.5}><rect x="1" y="4" width="11" height="11" rx="2" stroke="#000" /><path d="M4 1.500h7a3.500 3.500 0 0 1 3.500 3.500v6.500" stroke="#000" /></I></WindowButton>
          <WindowButton><I s={16} sw={1.4}><path d="m.7.7 14.600 14.600M15.300.7.7 15.300" stroke="#000" /></I></WindowButton>
        </WindowButtons>
      </TitleBar>
      <MenuBar>{menus.map(([m, w]) => <MenuItem key={m} $w={w}>{m}</MenuItem>)}</MenuBar>
      <Toolbar>{tools.map(([k, gap, off], i) => <ToolEntry key={i} kind={k} gap={gap} off={off} />)}</Toolbar>

      <Body>
        <DataPane>
          <PaneTabs>
            <DataTab>Data</DataTab>
            <AnalyticsTab>Analytics<I w={8} h={12} sw={1.3}><path d="M6.500 1 1.500 6l5 5" stroke="#666" /></I></AnalyticsTab>
          </PaneTabs>
          <SourceRow>
            <svg width="15" height="17" viewBox="0 0 15 17" fill="none" stroke="#777" strokeWidth="1.100"><path d="M5 14.500q-4 0-4-2V3q0-2.200 4.500-2.200T10 3v5M1 3q0 2.200 4.500 2.200T10 3" /><circle cx="10.500" cy="12.500" r="4" fill="#2f7f9e" stroke="none" /><path d="m8.700 12.500 1.300 1.500 2.300-2.800" stroke="#fff" /></svg>
            country_wise_latest
          </SourceRow>
          <SearchRow>
            <SearchBox>Search<I s={12}><circle cx="7" cy="4.700" r="3.500" stroke="#666" /><path d="M4.700 7.300 1 11" stroke="#666" /></I></SearchBox>
            <I s={14} sw={1.1}><path d="M.8.8h12.400L8.500 6.500V13L5.500 12V6.500z" /></I>
            <SearchDivider />
            <I s={13} sw={1.6}><path d="M0 1.500h3M4.500 1.500H13M0 4.500h3M4.500 4.500H13M0 7.500h3M4.500 7.500H13M0 10.500h3M4.500 10.500H13" strokeDasharray="3 .8" /></I>
            <CaretHolder><Caret $s={3.5} /></CaretHolder>
          </SearchRow>
          <TablesHeading>Tables</TablesHeading>
          <FieldGroup>{dimensionFields.map(f => <FieldRow key={f[1]} field={f} color="#3a7f9c" />)}</FieldGroup>
          <FieldGroup>{measureFields.map(f => <FieldRow key={f[1]} field={f} color="#3ba77b" />)}</FieldGroup>
        </DataPane>

        <Shelves>
          <Card $h={88}><CardTitle>Pages</CardTitle></Card>
          <Card $h={113}><CardTitle>Filters</CardTitle></Card>
          <Card $h={389}>
            <CardTitle>Marks</CardTitle>
            <MarkSelect><MarkSquare /><span>Automatic</span><SelectArrow $w={27}><Caret $s={3.5} /></SelectArrow></MarkSelect>
            <MarkGrid>
              <MarkButton><Dots s={24} r={4.2} d={5.3} />Color</MarkButton>
              <MarkButton><SizeIcon s={24} />Size</MarkButton>
              <MarkButton><svg width="24" height="24" viewBox="0 0 24 24"><svg x="1" y="3" width="22" height="19"><LabelIcon w={22} h={19} /></svg></svg>Label</MarkButton>
              <MarkButton><svg width="26" height="24" viewBox="0 0 26 24" fill="none" stroke="#666" strokeWidth="1.500"><circle cx="13" cy="8" r="3.600" fill="#666" stroke="none" /><circle cx="4.500" cy="17" r="2.900" /><circle cx="13" cy="17" r="2.900" /><circle cx="21.500" cy="17" r="2.900" /></svg>Detail</MarkButton>
              <MarkButton><svg width="24" height="24" viewBox="0 0 24 24" fill="none" stroke="#777" strokeWidth="1.500"><path d="M3 3h18a1 1 0 0 1 1 1v11a1 1 0 0 1-1 1h-4v5l-5-5H3a1 1 0 0 1-1-1V4a1 1 0 0 1 1-1z" /></svg>Tooltip</MarkButton>
            </MarkGrid>
            <PillList>
              <PillRow><PillIcon><SizeIcon s={16} /></PillIcon><Pill $w={169} $c={green} $ls={0.5}>SUM(Deaths)</Pill></PillRow>
              <PillRow><PillIcon><Dots s={16} r={2.9} d={4} /></PillIcon><Pill $w={169} $c={green} $ls={0.5}>SUM(Deaths)</Pill></PillRow>
              <PillRow><PillIcon><LabelIcon w={14} h={12.5} /></PillIcon><Pill $w={169} $c={blue} $ls={0.48}>Country/Region</Pill></PillRow>
            </PillList>
          </Card>
        </Shelves>

        <Workspace>
          <Shelf><ShelfLabel><I s={13} sw={2}><path d="M2.200 0v2.500M6.500 0v2.500M10.800 0v2.500M2.200 4v9M6.500 4v9M10.800 4v9" /></I>Columns</ShelfLabel></Shelf>
          <Shelf><ShelfLabel><I s={13} sw={1.8}><path d="M0 2h2.500M4 2h9M0 6.500h2.500M4 6.500h9M0 11h2.500M4 11h9" /></I>Rows</ShelfLabel></Shelf>
          <Sheet>
            <SheetTitle>country vs Death</SheetTitle>
            <Treemap width="1002" height="617" viewBox="580 290 1002 617">
              <g shapeRendering="crispEdges">
                {cells.map(([x0, y0, x1, y1, fill], i) => <rect key={i} x={x0} y={y0} width={x1 - x0} height={y1 - y0} fill={fill} />)}
                <rect x="580.5" y="677.5" width="361" height="229" fill="#3a95b3" stroke="#1c1c1c" />
              </g>
              {labels.map(([x, y, t]) => <text key={t} x={x + 7.5} y={y + 26} fill={x < 900 ? '#e3ecf2' : '#1e2a2a'}>{t}</text>)}
            </Treemap>
          </Sheet>
        </Workspace>
      </Body>

      <SheetTabs>
        <SheetTab $w={196} $pl={12}><I w={10} h={14}><path d="M1 3q0-2 4-2t4 2v8q0 2-4 2t-4-2zM1 3q0 2 4 2t4-2" /></I>Data Source</SheetTab>
        <SheetTab $w={83} $pl={9}>Sheet 1</SheetTab>
        <SheetTab $w={85} $pl={9} $active>Sheet 2</SheetTab>
        <SheetTab $w={32} $pl={2} $icon><I s={18}><path d="M9 12.500H2V2h11v7M5 10V7.500M7.500 10V5M10 9V6" />{plus(12.5, 12.5, 3.5, 2, '#555')}</I></SheetTab>
        <SheetTab $w={32} $pl={2} $icon><I s={18}><path d="M9 12.500H2V2h11v7M2 7h11M7.500 2v10.500" />{plus(12.5, 12.5, 3.5, 2, '#555')}</I></SheetTab>
        <SheetTab $w={32} $pl={2} $icon><I s={18}><path d="M8 13.500Q6 11.500 2 12.500V2q4-.5 5.500 1.500Q9 1.500 13 2v7M7.500 3.500V12" />{plus(12.5, 12.5, 3.5, 2, '#555')}</I></SheetTab>
      </SheetTabs>
      <StatusBar>
        <StatusText $w={100} $ls={-0.3}>187 marks</StatusText>
        <StatusText $w={154} $ls={-0.38}>1 row by 1 column</StatusText>
        <StatusText $w={1178} $ls={0.3}>SUM(Deaths): 654,036</StatusText>
        <StatusCell $w={189} /><StatusCell $w={39} /><StatusCell $w={39} /><StatusCell $w={69} />
        <StatusCell $w={73} $g={8}>
          {['M1.500 1v8M8 1v8L3.500 5z', 'M7 1v8L2.500 5z', 'M2 1v8l4.500-4z', 'M2 1v8l4.500-4zM8.500 1v8'].map(d => <svg key={d} width="8" height="10" viewBox="0 0 9 10" fill="#b5b5b5" stroke="#b5b5b5" strokeWidth=".8"><path d={d} /></svg>)}
        </StatusCell>
        <StatusCell $w={75} $g={12}>
          <svg width="11" height="11" fill="#b5b5b5"><path d="M0 0h3v3H0zM4 0h3v3H4zM8 0h3v3H8zM0 4h3v3H0zM4 4h3v3H4zM8 4h3v3H8zM0 8h3v3H0zM4 8h3v3H4zM8 8h3v3H8z" /></svg>
          <svg width="11" height="11" fill="#b5b5b5"><path d="M0 0h11v7H0zM0 8h3v3H0zM4 8h3v3H4zM8 8h3v3H8z" /></svg>
          <svg width="11" height="11" fill="#5c5c5c"><path d="M0 0h11v11H0z" /></svg>
        </StatusCell>
      </StatusBar>

      <Taskbar>
        <Weather>
          <svg width="36" height="24" viewBox="0 0 36 24"><defs><linearGradient id="cl" x1="0" y1="0" x2="0" y2="1"><stop offset="0" stopColor="#a9c3ee" /><stop offset="1" stopColor="#eceef8" /></linearGradient></defs><path fill="url(#cl)" d="M7 23.500a6.500 6.500 0 0 1-.5-13Q8 1 17 .5q7.500.5 9.500 6.500a8.300 8.300 0 0 1 1 16.500z" /><path d="M19 12q3-6 9-5a8 8 0 0 1 0 16.500H10z" fill="#d3dcf0" opacity=".7" /></svg>
          <WeatherText><span>86°F</span><small>Cloudy</small></WeatherText>
        </Weather>
        <Apps>
          {apps.map(([k, run]) => (
            <AppSlot key={k}><AppFace $active={run === 2}><TaskFace kind={k} />{run ? <Running $active={run === 2} /> : null}</AppFace></AppSlot>
          ))}
        </Apps>
        <Tray>
          <TrayItem $w={48}><I w={20} h={12} sw={1.5}><path d="m1 11 9-9 9 9" /></I></TrayItem>
          <TrayItem $w={48}><svg width="26" height="18" viewBox="0 0 26 18"><path fill="#e8e8e8" stroke="#222" strokeWidth="1.400" d="M6 16.500a5 5 0 0 1 0-10Q8 1 13 1q5 0 7 5.500a5 5 0 0 1 0 10z" /><path fill="#9a9a9a" d="M2 10q1-3 5-2.800Q8.500 1.700 13 1.700q4.500 0 6.500 5L9 11.500l-6 2z" /></svg></TrayItem>
          <TrayItem $w={66}><span>ENG</span><span>IN</span></TrayItem>
          <TrayItem $w={48}><I w={24} h={18} sw={1.6}><path d="M1 6.500q11-10 22 0M4.300 10q7.700-7 15.400 0M7.700 13.200q4.300-4 8.600 0" /><circle cx="12" cy="16" r="2" fill="currentColor" stroke="none" /></I></TrayItem>
          <TrayItem $w={24}><I w={25} h={20} sw={1.5}><path d="M1 7h4l5.500-5v16L5 13H1zM14 6.500q2.500 3.500 0 7M17.500 4q4.500 6 0 12M21 1.500q6 8.500 0 17" /></I></TrayItem>
          <TrayItem $w={48}><I w={25} h={16} sw={1.6}><rect x="1" y="1" width="20" height="14" rx="3" /><path d="M3.500 3.500H9v9H3.500z" fill="currentColor" stroke="none" /><path d="M23 5.500v5" strokeWidth="2.500" /></I></TrayItem>
          <Clock $a="flex-end"><span>05:27 PM</span><span>06-08-2022</span></Clock>
        </Tray>
      </Taskbar>

      <Tooltip><span>Country/Region:</span><b>Brazil</b><span>Deaths:</span><b>87,618</b></Tooltip>

      <ShowMe>
        <ShowMeTab><svg width="14" height="20" viewBox="0 0 14 20">{R('#8a7198', [[0, 0, 11, 4]])}{R('#7ea4c9', [[0, 5, 14, 4]])}{R('#f2a57e', [[0, 10, 5, 4]])}{R('#f7708b', [[0, 15, 8, 4]])}</svg>Show Me</ShowMeTab>
        <ShowMeBody>
          <ThumbGrid>
            {thumbs.map((t, i) => (
              <Thumb key={i} $state={i === 3 ? 'suggested' : i === 9 ? 'current' : undefined}>
                <svg width="83" height="62" viewBox={`${90 + 270 * (i % 3)} ${thumbRows[Math.floor(i / 3)]} 249 186`}>{t}</svg>
              </Thumb>
            ))}
          </ThumbGrid>
          <HintBlock>
            <Hint $h={41}>For <b>treemaps</b> try</Hint>
            <Hint $h={36}><HintText $w={81} $ls={-0.6}>1 or more</HintText><Pill $w={136} $c={blue}>Dimensions</Pill></Hint>
            <Hint $h={48}><HintText $w={48} $ls={-0.7}>1 or 2</HintText><Pill $w={118} $c={green}>Measures</Pill></Hint>
          </HintBlock>
        </ShowMeBody>
      </ShowMe>
    </Desktop>
  );
}
